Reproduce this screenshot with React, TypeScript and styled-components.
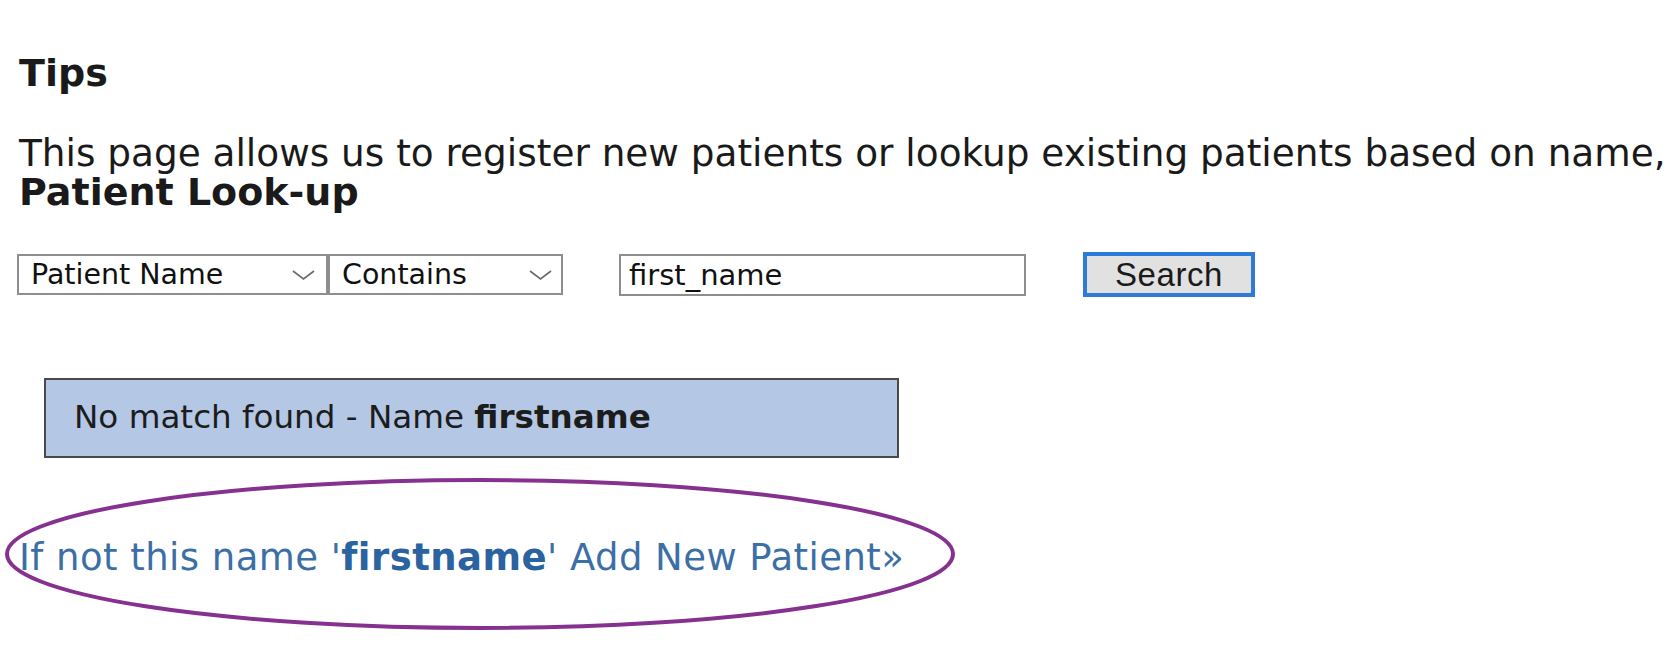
import React from "react";
import styled, { createGlobalStyle } from "styled-components";

const GlobalStyle = createGlobalStyle`
  html, body {
    margin: 0;
    padding: 0;
    background: #ffffff;
  }
  body {
    font-family: "DejaVu Sans", Verdana, sans-serif;
    color: #1a1a1a;
    overflow: hidden;
  }
`;

const Page = styled.div`
  width: 1670px;
  height: 658px;
  padding: 54px 0 0 19px;
  box-sizing: border-box;
  overflow: hidden;
`;

const Heading = styled.div`
  font-size: 38px;
  line-height: 39px;
  font-weight: bold;
  color: #1a1a1a;
`;

const Paragraph = styled.p`
  margin: 41px 0 0;
  font-size: 37.4px;
  line-height: 39px;
  white-space: nowrap;
  color: #1a1a1a;
`;

const SubHeading = styled.div`
  font-size: 38px;
  line-height: 39px;
  font-weight: bold;
  color: #1a1a1a;
`;

const SearchRow = styled.div`
  margin: 40px 0 0 -2px;
  display: flex;
  align-items: center;
  height: 45px;
`;

const SelectBox = styled.div<{ $w: number; $chevRight: number }>`
  box-sizing: border-box;
  width: ${(p) => p.$w}px;
  height: 41px;
  border: 2px solid #8e8e8e;
  background: #ffffff;
  display: flex;
  align-items: center;
  justify-content: space-between;
  padding: 0 ${(p) => p.$chevRight}px 0 12px;
  font-family: "DejaVu Sans", Tahoma, sans-serif;
  font-size: 28.5px;
  color: #111;
`;

const SelectLabel = styled.span`
  white-space: nowrap;
`;

const Chevron = styled.svg`
  width: 23px;
  height: 10px;
  flex: none;
`;

const TextInput = styled.input`
  box-sizing: border-box;
  margin-left: 56px;
  width: 407px;
  height: 42px;
  border: 2px solid #8e8e8e;
  padding: 0 8px;
  font-family: "DejaVu Sans", Tahoma, sans-serif;
  font-size: 29px;
  color: #111;
  background: #fff;
  outline: none;
`;

const SearchButton = styled.button`
  box-sizing: border-box;
  margin-left: 57px;
  width: 172px;
  height: 45px;
  border: 4px solid #2d7bd6;
  background: #e1e1e1;
  font-family: "Liberation Sans", Arial, sans-serif;
  font-size: 33px;
  letter-spacing: 0.6px;
  color: #1a1a1a;
  padding: 0;
  line-height: 1;
`;

const NoMatchBox = styled.div`
  box-sizing: border-box;
  margin: 81px 0 0 25px;
  width: 855px;
  height: 80px;
  border: 2px solid #4a4a4a;
  background: #b4c7e5;
  padding: 21px 0 0 28px;
  font-size: 32.6px;
  line-height: 33px;
  color: #1c1c1c;
  white-space: nowrap;
`;

const LinkArea = styled.div`
  position: relative;
  margin: 20px 0 0 -14px;
  width: 952px;
  height: 152px;
  box-sizing: border-box;
  padding: 60px 0 0 14px;
`;

const AddLink = styled.a`
  font-size: 37px;
  line-height: 40px;
  color: #3b6fa6;
  text-decoration: none;
  white-space: nowrap;
  letter-spacing: 0.45px;
`;

const Strong = styled.b`
  font-weight: bold;
`;

const LinkStrong = styled.b`
  font-weight: bold;
  color: #2b62a0;
`;

const Ellipse = styled.svg`
  position: absolute;
  left: 0;
  top: 0;
  width: 952px;
  height: 152px;
  pointer-events: none;
  overflow: visible;
`;

const ChevronIcon = () => (
  <Chevron viewBox="0 0 23 10">
    <polyline points="1,1 11.5,9 22,1" fill="none" stroke="#6a6a6a" strokeWidth="1.6" />
  </Chevron>
);

export default function App() {
  return (
    <>
      <GlobalStyle />
      <Page>
        <Heading>Tips</Heading>
        <Paragraph>
          This page allows us to register new patients or lookup existing patients based on name,
        </Paragraph>
        <SubHeading>Patient Look-up</SubHeading>
        <SearchRow>
          <SelectBox $w={311} $chevRight={11}>
            <SelectLabel>Patient Name</SelectLabel>
            <ChevronIcon />
          </SelectBox>
          <SelectBox $w={235} $chevRight={9}>
            <SelectLabel>Contains</SelectLabel>
            <ChevronIcon />
          </SelectBox>
          <TextInput defaultValue="first_name" />
          <SearchButton>Search</SearchButton>
        </SearchRow>
        <NoMatchBox>
          No match found - Name <Strong>firstname</Strong>
        </NoMatchBox>
        <LinkArea>
          <AddLink href="#">
            If not this name '<LinkStrong>firstname</LinkStrong>' Add New Patient»
          </AddLink>
          <Ellipse viewBox="0 0 952 152">
            <ellipse cx="475" cy="76" rx="473" ry="74" fill="none" stroke="#86318f" strokeWidth="4" />
          </Ellipse>
        </LinkArea>
      </Page>
    </>
  );
}
